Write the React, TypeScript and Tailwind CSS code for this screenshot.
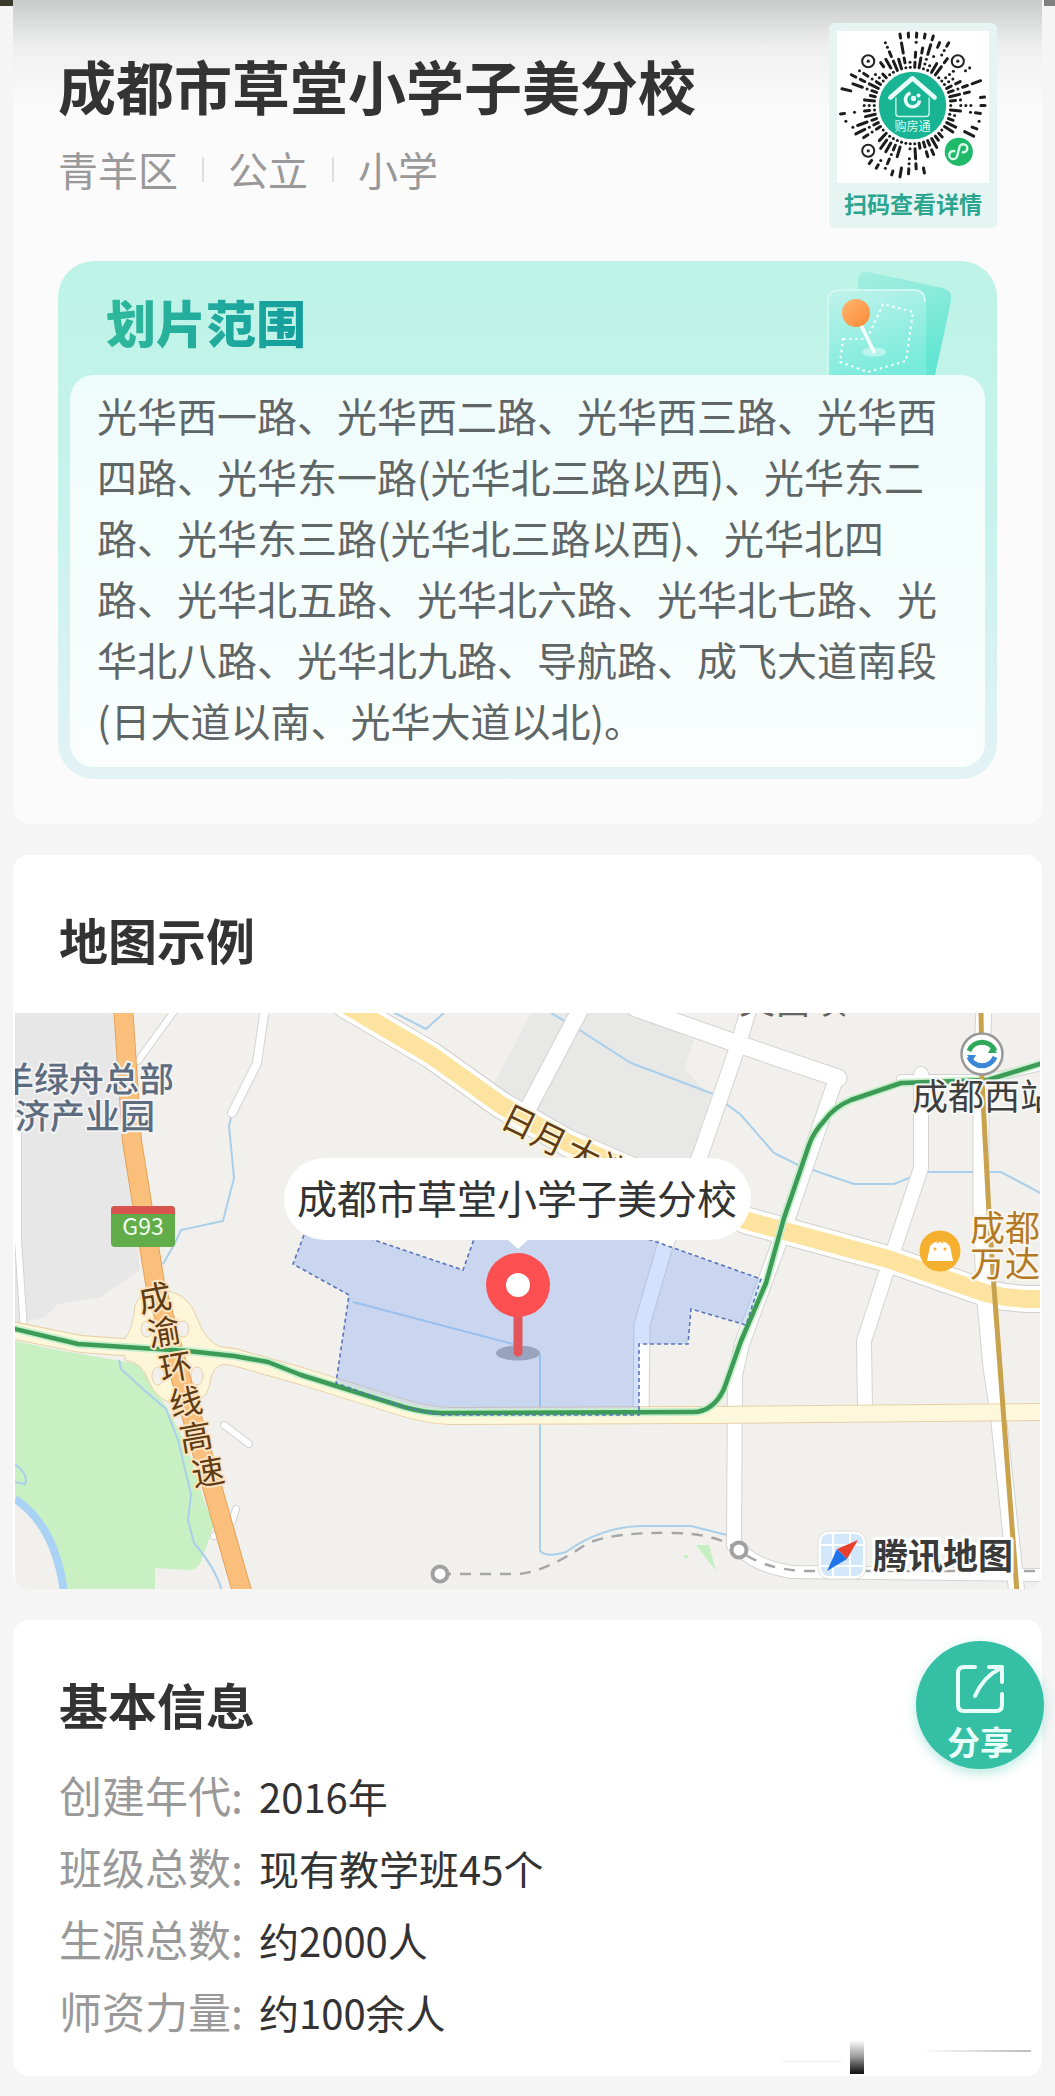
import React from 'react';

const FONT = "font-['Noto_Sans_CJK_SC','Noto_Sans',sans-serif]";

/* ---------- mini-program code ---------- */

type Dash = { x1: number; y1: number; x2: number; y2: number };

function codeDashes(): Dash[] {
  const cx = 75;
  const cy = 74;
  const keepOut = [
    { x: 31, y: 30, r: 10 },
    { x: 120, y: 30, r: 10 },
    { x: 31, y: 119, r: 10 },
    { x: 121, y: 120, r: 18 },
  ];
  let seed = 11;
  const rand = () => {
    seed = (seed * 16807) % 2147483647;
    return seed / 2147483647;
  };
  const free = (x: number, y: number) => keepOut.every((k) => Math.hypot(x - k.x, y - k.y) > k.r);
  const out: Dash[] = [];
  const spokes = 54;
  for (let i = 0; i < spokes; i++) {
    const a = (i / spokes) * Math.PI * 2;
    const ca = Math.cos(a);
    const sa = Math.sin(a);
    let r = 38;
    while (r < 72) {
      const len = rand() < 0.5 ? 0 : rand() < 0.6 ? 5 : 10;
      const end = Math.min(r + len, 72);
      const skip = r > 38 && rand() < 0.38;
      if (!skip && free(cx + ca * r, cy + sa * r) && free(cx + ca * end, cy + sa * end)) {
        out.push({ x1: cx + ca * r, y1: cy + sa * r, x2: cx + ca * end + 0.01, y2: cy + sa * end });
      }
      r = end + 5;
    }
  }
  return out;
}

const DASHES = codeDashes();

function MiniCode() {
  return (
    <svg viewBox="0 0 151 151" className="block w-full bg-white" role="img" aria-label="购房通小程序码">
      <g stroke="#1c1c1c" strokeWidth="3" strokeLinecap="round">
        {DASHES.map((d, i) => (
          <line key={i} {...d} />
        ))}
      </g>
      {[
        [31, 30],
        [120, 30],
        [31, 119],
      ].map(([x, y]) => (
        <g key={`${x}-${y}`}>
          <circle cx={x} cy={y} r="6" fill="#fff" stroke="#222" strokeWidth="2" />
          <circle cx={x} cy={y} r="1.6" fill="#222" />
        </g>
      ))}
      <circle cx="75" cy="74" r="33.5" fill="#18b494" />
      <path d="M53 66 L75 47 L97 66" fill="none" stroke="#e9fffa" strokeWidth="4.5" strokeLinecap="round" strokeLinejoin="round" />
      <path d="M58.500 66 V82 Q58.500 85 61.500 85 H88.500 Q91.500 85 91.500 82 V66" fill="none" stroke="#c9f5ea" strokeWidth="1.4" />
      <path d="M73 61.500 A7 7 0 1 0 82 69" fill="none" stroke="#e9fffa" strokeWidth="3.6" />
      <circle cx="76" cy="67" r="2.600" fill="#e9fffa" />
      <circle cx="81" cy="64" r="2" fill="#e9fffa" />
      <text x="75" y="99" textAnchor="middle" fontSize="12" fill="#d8fbf3">
        购房通
      </text>
      <circle cx="121" cy="120" r="14" fill="#1fb96a" />
      <path
        d="M116.500 120.500 a4 4 0 1 0 4 4 v-9 a4 4 0 1 1 4.500 4"
        fill="none"
        stroke="#d8ffe9"
        strokeWidth="2.400"
        strokeLinecap="round"
        transform="rotate(14 121 120)"
      />
    </svg>
  );
}

/* ---------- zone card drawing ---------- */

function ZoneArt() {
  return (
    <svg viewBox="0 0 130 106" className="block h-[106px] w-[130px]" aria-hidden="true">
      <defs>
        <linearGradient id="sheetBack" x1="0" y1="0" x2="0.3" y2="1">
          <stop offset="0" stopColor="#a5eedf" />
          <stop offset="1" stopColor="#62e6d3" />
        </linearGradient>
        <linearGradient id="sheetFront" x1="0.2" y1="0" x2="0.6" y2="1">
          <stop offset="0" stopColor="#bdf2ea" />
          <stop offset="1" stopColor="#78ebdc" />
        </linearGradient>
        <linearGradient id="ball" x1="0" y1="0" x2="1" y2="1">
          <stop offset="0" stopColor="#ffb570" />
          <stop offset="1" stopColor="#fb8a35" />
        </linearGradient>
      </defs>
      <path d="M33 12 Q34 1 44 3 L118 19 Q128 22 126 32 L110 106 H33 Z" fill="url(#sheetBack)" />
      <path d="M2 106 V33 Q2 20 15 20 H88 Q101 20 101 33 V106 Z" fill="url(#sheetFront)" />
      <path d="M3 106 V33 Q3 21 15 21 H88 Q100 21 100 33" fill="none" stroke="#d6faf4" strokeWidth="1.600" />
      <path
        d="M18 70 L42 70 L58 35 L88 43 L81 92 L43 103 L15 93 Z"
        fill="none"
        stroke="#f2fffd"
        strokeWidth="2.200"
        strokeDasharray="2.500 3.500"
      />
      <ellipse cx="49" cy="83" rx="12" ry="4.500" fill="#b9f5ec" />
      <path d="M36 56 L49 83" stroke="#f4fffd" strokeWidth="3.600" strokeLinecap="round" />
      <circle cx="31" cy="44" r="14" fill="url(#ball)" />
    </svg>
  );
}

/* ---------- map ---------- */

const ROADS: { d: string; w: number }[] = [
  { d: 'M174 10 L137 61', w: 6 },
  { d: 'M264 8 L256 63 L231 113', w: 8 },
  { d: 'M17 120 L17 240 L23 330', w: 6 },
  { d: 'M580 8 L521 120', w: 16 },
  { d: 'M635 8 L737 44 L837 78', w: 17 },
  { d: 'M748 8 L737 46 L700 153 L663 249 L641 325 L640 415', w: 15 },
  { d: 'M836 76 L783 230 L741 344 L734 375 L733 545', w: 14 },
  { d: 'M920 74 L920 168 L888 264 L863 341 L864 410', w: 14 },
  { d: 'M900 79 L985 79 L1045 65', w: 8 },
  { d: 'M983 8 L980 80 L980 207 L983 291 L990 367 L997 413 L1010 536 L1016 595', w: 15 },
  { d: 'M733 540 Q745 564 790 572 L1045 575', w: 12 },
  { d: 'M223 425 L248 444', w: 6 },
  { d: 'M235 509 L231 522 M217 533 L213 536', w: 6 },
];

const PALE_ROAD = 'M10 330 L80 344 L190 352 L233 357 L300 376 L400 407 Q425 415 450 416 L700 415 L1045 412';
const METRO_GREEN =
  'M10 328 L77 344 L187 351 L233 356 L267 362 L300 375 L403 407 Q425 413 440 413 L692 412 Q712 412 723 389 L740 341 L765 283 L783 218 L808 145 Q812 133 823 121 Q833 107 850 100 L900 83 L987 80 L1045 62';
const YELLOW_ROAD = 'M345 5 L430 55 L500 105 L567 143 L747 221 L887 259 L973 289 Q1000 300 1045 299';
const HIGHWAY = 'M122 5 L131 141 L141 203 L154 283 L183 390 L212 490 L242 595';
const ZONE =
  'M303 235 L292 264 L348 295 L335 383 L403 407 L440 415 L638 415 L638 344 L687 344 L690 309 L745 325 L760 279 L650 240 L600 228 L477 228 L462 270 L370 239 Z';
const WATER = [
  'M231 113 L228 126 L233 178 L222 221 L180 230 L173 245 L162 264',
  'M390 11 L425 29 L445 11',
  'M550 13 L577 29 L630 63 L670 78 L712 94 L740 115 L773 153 L797 165 L853 184 L893 184 L923 172 L1000 172 L1045 196',
  'M352 302 L512 344',
  'M539 354 L539 551 Q545 558 565 552 Q600 527 640 526 L690 526 L730 536',
  'M118 360 L120 369 L143 390 L165 409 L177 440 L190 494 L187 520 L193 543 Q216 570 221 592',
  'M14 464 Q28 475 24 484 L14 482',
];
const HIGHWAY_NAME: [string, number, number][] = [
  ['成', 154, 298],
  ['渝', 163, 332],
  ['环', 175, 367],
  ['线', 185, 402],
  ['高', 195, 437],
  ['速', 207, 472],
];
const AVENUE_NAME: [string, number, number][] = [
  ['日', 518, 122],
  ['月', 548, 139],
  ['大', 582, 155],
  ['道', 614, 171],
];

function SchoolMap() {
  return (
    <svg
      viewBox="14 13 1025 576"
      className="block w-full overflow-hidden rounded-b-xl"
      role="img"
      aria-label="成都市草堂小学子美分校地图"
    >
      <rect x="14" y="13" width="1025" height="576" fill="#f1f0ec" />
      <path d="M14 13 H113 L124 141 L139 270 L100 297 L57 304 L43 318 L14 323 Z" fill="#e7e7e7" />
      <path d="M530 13 H630 L693 40 L683 69 L710 96 L690 160 L610 160 L490 90 Z" fill="#e8e8e7" />
      <path d="M14 341 L57 350 L137 364 L165 406 L187 448 L203 501 L213 524 L200 562 Q195 571 186 570 L154 568 V589 H66 Q58 540 14 497 Z" fill="#c9f0c3" />
      <path d="M695 545 L708 545 L715 571 Z M682 555 h6 l-3 4 Z" fill="#c4efc2" />
      <path d="M14 499 Q54 525 63 592" fill="none" stroke="#a9d2f5" strokeWidth="8" />

      <g fill="none" stroke="#a9cfea" strokeWidth="2">
        {WATER.map((d) => (
          <path key={d} d={d} />
        ))}
      </g>

      <g fill="none" strokeLinejoin="round" strokeLinecap="round">
        {ROADS.map((r) => (
          <path key={r.d} d={r.d} stroke="#d3d3d3" strokeWidth={r.w + 2} />
        ))}
        <path d={YELLOW_ROAD} stroke="#cfcfcf" strokeWidth="28" />
        {ROADS.map((r) => (
          <path key={r.d} d={r.d} stroke="#ffffff" strokeWidth={r.w} />
        ))}
        <path d={YELLOW_ROAD} stroke="#ffffff" strokeWidth="26" />
        <path d={YELLOW_ROAD} stroke="#fce4a0" strokeWidth="18" />
        <path d={PALE_ROAD} stroke="#e8cfa8" strokeWidth="18" />
      </g>

      <path
        d="M124 338 Q132 330 134 305 Q140 290 160 290 Q187 292 196 318 Q204 342 222 348 L224 364 Q210 366 209 384 Q205 404 180 406 Q156 402 148 382 Q142 362 124 360 Z"
        fill="#fdf6d9"
        stroke="#e8cfa8"
        strokeWidth="1"
      />
      <path d={PALE_ROAD} fill="none" stroke="#fdf8dc" strokeWidth="16" />
      <g fill="#f1f0ec" stroke="#e8cfa8" strokeWidth="1">
        <ellipse cx="146" cy="329" rx="6" ry="8" />
        <ellipse cx="182" cy="329" rx="6" ry="8" />
        <ellipse cx="157" cy="376" rx="6" ry="9" />
        <ellipse cx="196" cy="376" rx="6" ry="9" />
      </g>

      <path d={HIGHWAY} fill="none" stroke="#e3a25c" strokeWidth="20" />
      <path d={HIGHWAY} fill="none" stroke="#fabf7a" strokeWidth="18" />
      <path d="M140 352 L200 352" stroke="#fdf8dc" strokeWidth="9" />

      <g fill="none" stroke="#a6a6a6" strokeWidth="2.400" strokeDasharray="11 9">
        <path d="M439 574 L517 574 Q545 572 587 543 Q615 532 670 533 Q715 533 738 550 Q760 568 800 571 L1045 571" />
      </g>

      <path d={ZONE} fill="#6f9cf5" fillOpacity="0.3" />
      <path d={METRO_GREEN} fill="none" stroke="#c8eecb" strokeWidth="8" />
      <path d={METRO_GREEN} fill="none" stroke="#3c9c57" strokeWidth="4.500" strokeLinejoin="round" />
      <path d={ZONE} fill="none" stroke="#5a76b8" strokeWidth="1.600" strokeDasharray="4 3" />
      <path d="M980 10 L981 80 L988 214 L993 287 L1003 421 L1016 592" fill="none" stroke="#c9a24e" strokeWidth="5" />

      <circle cx="439" cy="574" r="7.500" fill="#fff" stroke="#a0a0a0" strokeWidth="4" />
      <circle cx="738" cy="550" r="7.500" fill="#fff" stroke="#a0a0a0" strokeWidth="4" />

      <g paintOrder="stroke" strokeLinejoin="round" textRendering="geometricPrecision">
        <g fontSize="36" fill="#66645f">
          <text x="738" y="14">文昌坝</text>
        </g>
        <g fontSize="35" fontWeight="500" fill="#5d6c7e" stroke="#f3f3f3" strokeWidth="4">
          <text x="-2" y="92">羊绿舟总部</text>
          <text x="14" y="129">济产业园</text>
        </g>
        <g fontSize="33" fill="#5e3c14" stroke="#fde3bf" strokeWidth="4" textAnchor="middle">
          {HIGHWAY_NAME.map(([c, x, y]) => (
            <text key={c} x={x} y={y} dy="12" transform={`rotate(-10 ${x} ${y})`}>
              {c}
            </text>
          ))}
        </g>
        <g fontSize="34" fill="#5e3c14" stroke="#fdf3d6" strokeWidth="4" textAnchor="middle">
          {AVENUE_NAME.map(([c, x, y]) => (
            <text key={c} x={x} y={y} dy="12" transform={`rotate(26 ${x} ${y})`}>
              {c}
            </text>
          ))}
        </g>
      </g>

      <rect x="110" y="206" width="64" height="41" rx="4" fill="#62ad4a" />
      <path d="M110 214 V210 Q110 206 114 206 H170 Q174 206 174 210 V214 Z" fill="#d9534f" />
      <text x="142" y="235" textAnchor="middle" fontSize="23" fill="#f3fff0">
        G93
      </text>

      <circle cx="981" cy="54" r="20.500" fill="#fff" stroke="#999" strokeWidth="2.500" />
      <path d="M968 51 A14 14 0 0 1 994 51" fill="none" stroke="#2fa85c" strokeWidth="5" />
      <path d="M968 57 A14 14 0 0 0 994 57" fill="none" stroke="#3a87d6" strokeWidth="5" />
      <path d="M991 46 L996 53 L987 53 Z" fill="#2fa85c" />
      <path d="M971 62 L966 55 L975 55 Z" fill="#3a87d6" />

      <circle cx="939" cy="251" r="20.500" fill="#f6b02f" />
      <path d="M929 246 Q939 236 949 246 L952 261 H926 Z" fill="#fff" />
      <path d="M936 243 Q939 239 942 243" fill="none" stroke="#f6b02f" strokeWidth="1.500" />
      <circle cx="934" cy="249" r="1.500" fill="#f6b02f" />
      <circle cx="944" cy="249" r="1.500" fill="#f6b02f" />

      <g paintOrder="stroke" strokeLinejoin="round">
        <text x="911" y="110" fontSize="36" fill="#3f3f3f" stroke="#f7f7f5" strokeWidth="4">
          成都西站
        </text>
        <g fontSize="35" fill="#b37a26" stroke="#fbf7ee" strokeWidth="4">
          <text x="969" y="241">成都</text>
          <text x="969" y="277">万达</text>
        </g>
      </g>

      <rect x="283" y="158" width="467" height="82" rx="41" fill="#fff" />
      <path d="M506 239 L517 249 L528 239 Z" fill="#fff" />
      <text x="516" y="214" textAnchor="middle" fontSize="40" fill="#333">
        成都市草堂小学子美分校
      </text>

      <ellipse cx="517" cy="353" rx="22" ry="7.500" fill="#98a3bd" />
      <path d="M517 312 V352" stroke="#e3555b" strokeWidth="9" strokeLinecap="round" />
      <circle cx="517" cy="285" r="32" fill="#fb4f52" />
      <circle cx="517" cy="285" r="12" fill="#fff" />

      <rect x="817" y="531" width="48" height="48" rx="11" fill="#fff" stroke="#dcdcdc" strokeWidth="1" />
      <rect x="820" y="534" width="42" height="42" rx="8" fill="#d3e7fb" />
      <path d="M832 534 V576 M849 534 V576 M820 545 H862 M820 566 H862" stroke="#fff" strokeWidth="2" />
      <path d="M857 540 L836 549 L846 559 Z" fill="#e8402c" />
      <path d="M826 571 L836 549 L846 559 Z" fill="#1f74e8" />
      <text
        x="872"
        y="569"
        fontSize="35"
        fontWeight="700"
        fill="#3a3a3a"
        stroke="#fff"
        strokeWidth="6"
        strokeLinejoin="round"
        paintOrder="stroke"
      >
        腾讯地图
      </text>
    </svg>
  );
}

/* ---------- page ---------- */

const FACTS = [
  ['创建年代:', '2016年'],
  ['班级总数:', '现有教学班45个'],
  ['生源总数:', '约2000人'],
  ['师资力量:', '约100余人'],
];

function ShareButton() {
  return (
    <button
      type="button"
      className="absolute -right-0.5 top-[21px] flex size-32 flex-col items-center rounded-full bg-[#35c0a5] pt-6 text-[#e8fffa] shadow-[0_4px_12px_rgba(53,192,165,0.35)]"
    >
      <svg
        viewBox="0 0 48 48"
        className="size-12"
        fill="none"
        stroke="currentColor"
        strokeWidth="4"
        strokeLinecap="round"
        strokeLinejoin="round"
        aria-hidden="true"
      >
        <path d="M19 2 H8 Q2 2 2 8 V40 Q2 46 8 46 H40 Q46 46 46 40 V29" />
        <path d="M33 2 H46 V17" />
        <path d="M45 3 Q27 12 19 31" />
      </svg>
      <span className="mt-2 text-[33px] leading-10 font-bold">分享</span>
    </button>
  );
}

export default function App() {
  return (
    <main className={`relative flex flex-col gap-[31px] bg-[#f5f5f5] px-[13px] pb-5 text-[#333] ${FONT}`} lang="zh-CN">
      <div className="absolute top-0 left-0 h-1.5 w-[13px] bg-[#3a3a2c]" />
      <div className="absolute top-0 right-0 h-1.5 w-[11px] bg-[#808080]" />

      <section className="rounded-b-2xl bg-[#fbfbfb] bg-linear-to-b from-[#c9cbcb] via-[#f0f0f0] via-[48px] to-[#fbfbfb] to-[110px] px-[45px] pt-[23px] pb-[45px]">
        <div className="flex items-start justify-between">
          <header className="pt-[26px]">
            <h1 className="text-[58px] leading-[72px] font-bold">成都市草堂小学子美分校</h1>
            <p className="mt-[18px] flex items-center gap-6 text-[40px] leading-[60px] text-[#999]">
              <span>青羊区</span>
              <span className="h-[25px] w-0.5 bg-[#dedede]" />
              <span>公立</span>
              <span className="h-[25px] w-0.5 bg-[#dedede]" />
              <span>小学</span>
            </p>
          </header>
          <figure className="w-[168px] rounded-md bg-[#e6f5f2] p-2">
            <MiniCode />
            <figcaption className="pt-[3px] text-center text-[23px] leading-[34px] font-bold text-[#2ba590]">
              扫码查看详情
            </figcaption>
          </figure>
        </div>

        <div className="mt-[33px] rounded-[36px] bg-linear-to-b from-[#bdf3e7] via-[#c8f3ec] to-[#e3f2f5] px-3 pb-3">
          <div className="flex h-[114px] items-end justify-between pr-[30px] pl-9">
            <h2 className="mb-[18px] bg-linear-to-r from-[#2fb99b] to-[#129d9d] bg-clip-text text-[50px] leading-[72px] font-black text-transparent">
              划片范围
            </h2>
            <ZoneArt />
          </div>
          <p className="rounded-3xl bg-linear-to-b from-[#eefcfb] to-[#fafffe] px-[27px] pt-2.5 pb-4 text-[40px] leading-[61px] text-[#606665]">
            光华西一路、光华西二路、光华西三路、光华西四路、光华东一路(光华北三路以西)、光华东二路、光华东三路(光华北三路以西)、光华北四路、光华北五路、光华北六路、光华北七路、光华北八路、光华北九路、导航路、成飞大道南段(日大道以南、光华大道以北)。
          </p>
        </div>
      </section>

      <section className="rounded-2xl bg-white">
        <h2 className="px-[46px] pt-[54px] pb-11 text-[49px] leading-[60px] font-bold">地图示例</h2>
        <div className="px-0.5">
          <SchoolMap />
        </div>
      </section>

      <section className="relative rounded-2xl bg-white px-[46px] pt-[54px] pb-[30px]">
        <h2 className="text-[49px] leading-[60px] font-bold">基本信息</h2>
        <dl className="mt-6">
          {FACTS.map(([k, v]) => (
            <div key={k} className="flex h-[72px] items-center">
              <dt className="w-[200px] text-[43px] leading-[64px] text-[#999]">{k}</dt>
              <dd className="pt-1 text-[40px] leading-[60px]">{v}</dd>
            </div>
          ))}
        </dl>
        <ShareButton />
        <div className="absolute right-[178px] bottom-0.5 h-[34px] w-3.5 bg-linear-to-b from-white via-[#999] to-[#111]" />
        <div className="absolute right-[11px] bottom-6 h-0.5 w-[110px] bg-linear-to-r from-white to-[#bbb]" />
        <div className="absolute right-[200px] bottom-3.5 h-px w-[60px] bg-[#f0f0f0]" />
      </section>
    </main>
  );
}
